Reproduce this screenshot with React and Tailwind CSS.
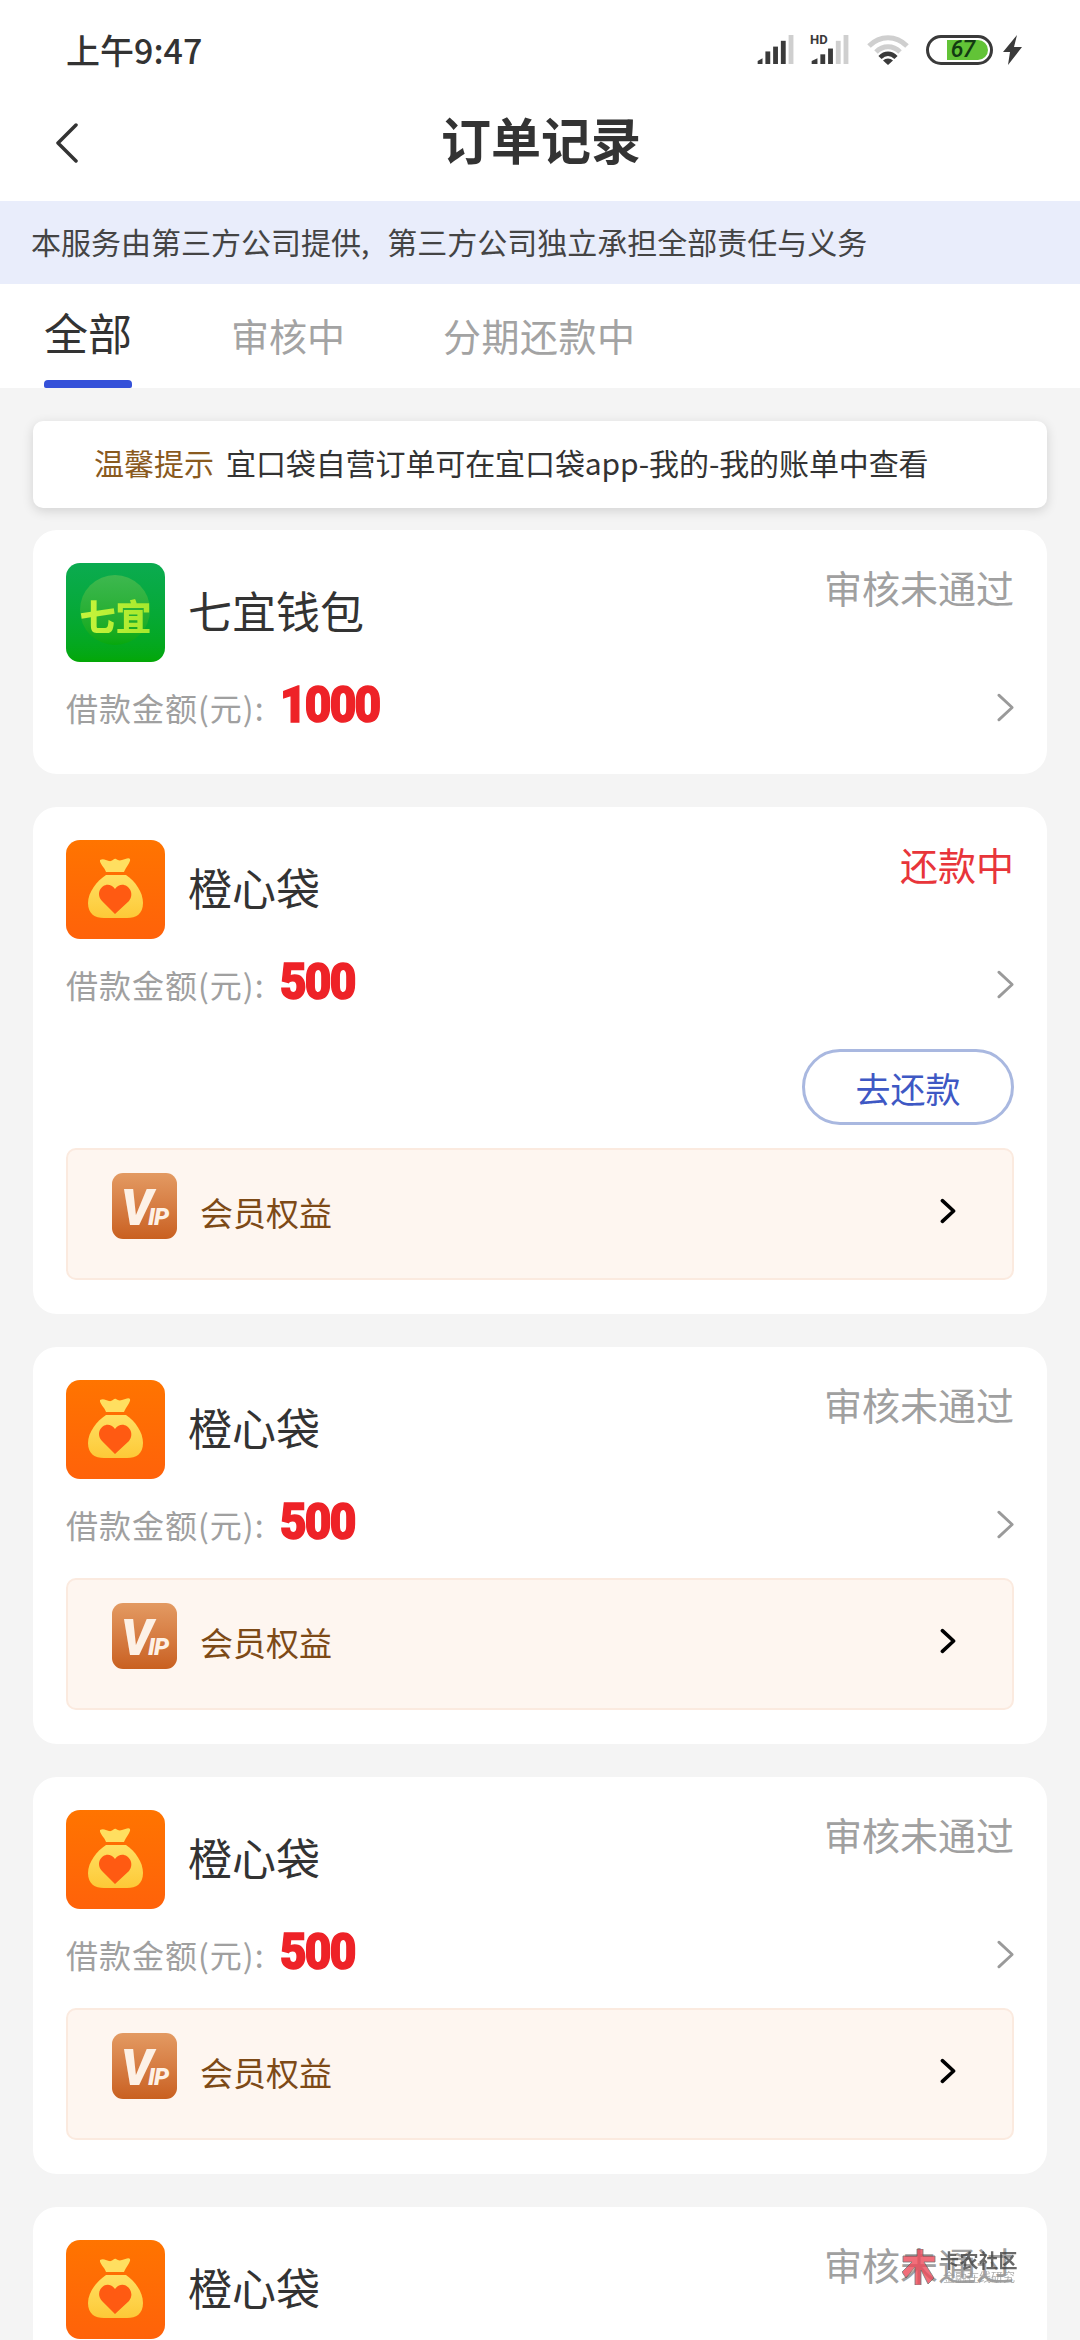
import React from "react";

const FONT = { fontFamily: '"Noto Sans CJK SC", "Noto Sans", sans-serif' };

function Chevron({ color = "#9a9a9a", width = 3, className = "" }) {
  return (
    <svg viewBox="0 0 20 32" className={className} fill="none">
      <path d="M3 3l14 13L3 29" stroke={color} strokeWidth={width} strokeLinecap="round" strokeLinejoin="round" />
    </svg>
  );
}

function SignalBars({ className = "" }) {
  return (
    <svg viewBox="0 0 40 30" className={className}>
      <path d="M0 30v-3l5-3v6z" fill="#3a3a3a" />
      <rect x="8" y="17" width="5" height="13" fill="#3a3a3a" />
      <rect x="16" y="12" width="5" height="18" fill="#3a3a3a" />
      <rect x="24" y="6" width="5" height="24" fill="#3a3a3a" />
      <rect x="32" y="0" width="5" height="30" fill="#cfcfcf" />
    </svg>
  );
}

function HdSignalBars({ className = "" }) {
  return (
    <svg viewBox="0 0 40 30" className={className}>
      <path d="M0 30v-3l6-3v6z" fill="#3a3a3a" />
      <rect x="9" y="20" width="5" height="10" fill="#3a3a3a" />
      <rect x="17" y="14" width="5" height="16" fill="#3a3a3a" />
      <rect x="25" y="6" width="5" height="24" fill="#cfcfcf" />
      <rect x="33" y="0" width="5" height="30" fill="#cfcfcf" />
    </svg>
  );
}

function StatusBar() {
  return (
    <div className="h-[90px] flex items-center pl-[66px] pr-[58px] pt-[9px] justify-between">
      <span className="text-[34px] font-medium text-[#333]">上午9:47</span>
      <div className="flex items-center">
        <SignalBars className="w-[40px] h-[29px]" />
        <div className="relative ml-[14px] w-[40px] h-[29px]">
          <HdSignalBars className="w-[40px] h-[29px] absolute bottom-0 left-0" />
          <span className="absolute left-[-1px] top-[-2px] text-[13px] leading-[14px] font-bold text-[#3a3a3a]" style={{ fontFamily: "Roboto, sans-serif" }}>HD</span>
        </div>
        <svg viewBox="0 0 42 30" className="ml-[16px] w-[42px] h-[30px]" fill="none">
          <path d="M2 11C13 0 29 0 40 11" stroke="#cfcfcf" strokeWidth="5" />
          <path d="M9 17C16 10 26 10 33 17" stroke="#cfcfcf" strokeWidth="5" />
          <path d="M13 22.500C18 17.500 24 17.500 29 22.500" stroke="#3a3a3a" strokeWidth="4.500" />
          <path d="M21 30l-5-4.500a7 7 0 0 1 10 0z" fill="#3a3a3a" />
        </svg>
        <div className="ml-[17px] w-[67px] h-[30px] rounded-full border-[3px] border-[#3a3a3a] p-[2px] flex justify-end">
          <div className="w-[41px] h-full rounded-r-full bg-[#62c337] flex items-center justify-center">
            <span className="text-[23px] leading-none font-medium italic text-[#123a12] tracking-[-1px] -ml-[10px]" style={{ fontFamily: "Roboto, sans-serif" }}>67</span>
          </div>
        </div>
        <svg viewBox="0 0 19 30" className="ml-[10px] w-[19px] h-[30px]">
          <path d="M14 0L0 17h7L5 30l14-18h-8z" fill="#3a3a3a" />
        </svg>
      </div>
    </div>
  );
}

function NavBar() {
  return (
    <div className="relative h-[111px] flex items-center justify-center">
      <svg viewBox="0 0 24 40" className="absolute left-[55px] top-[33px] w-[24px] h-[40px]" fill="none">
        <path d="M21 2L3 20l18 18" stroke="#333" strokeWidth="3.500" strokeLinecap="round" strokeLinejoin="round" />
      </svg>
      <h1 className="text-[50px] font-bold text-[#333] leading-none -mt-[16px] ml-[2px]">订单记录</h1>
    </div>
  );
}

function Tabs() {
  return (
    <div className="h-[104px] shrink-0 flex bg-white pl-[44px]">
      <div className="relative w-[88px] flex justify-center">
        <span className="text-[44px] leading-none text-[#333] mt-[26px] whitespace-nowrap">全部</span>
        <div className="absolute bottom-0 left-0 w-[88px] h-[8px] rounded-t-[4px] rounded-b-[2px] bg-[#3551d9]" />
      </div>
      <span className="ml-[99px] text-[38px] leading-none text-[#a3a3a3] mt-[32px]">审核中</span>
      <span className="ml-[98px] text-[38px] tracking-[0.5px] leading-none text-[#a3a3a3] mt-[32px]">分期还款中</span>
    </div>
  );
}

function QiyiLogo() {
  return (
    <div className="relative w-[99px] h-[99px] shrink-0 rounded-[14px] bg-gradient-to-b from-[#0bab50] to-[#03a705] overflow-hidden flex items-center justify-center">
      <div className="absolute left-[14px] top-[12px] w-[70px] h-[70px] rounded-full bg-gradient-to-b from-[#3db84f] to-[#06a80c]" />
      <span className="relative text-[36px] leading-none font-black bg-gradient-to-r from-[#c9f53c] to-[#a4e82c] bg-clip-text text-transparent whitespace-nowrap mt-[4px]">七宜</span>
    </div>
  );
}

function BagLogo() {
  return (
    <svg viewBox="0 0 99 99" className="w-[99px] h-[99px] shrink-0 rounded-[14px]">
      <defs>
        <linearGradient id="bagBg" x1="0" y1="0" x2="0" y2="1">
          <stop offset="0" stopColor="#ff7400" />
          <stop offset="1" stopColor="#ff620a" />
        </linearGradient>
        <linearGradient id="bagBody" x1="0" y1="0" x2="0" y2="1">
          <stop offset="0" stopColor="#ffe063" />
          <stop offset="1" stopColor="#fdc937" />
        </linearGradient>
      </defs>
      <rect width="99" height="99" fill="url(#bagBg)" />
      <path d="M34 20c3-2 6 0 9 1 3 1 5-3 7-2s3 2 6 1 7-3 8-1c1 3-4 8-6 13H40c-1-4-7-9-6-12z" fill="#ffdf60" />
      <path d="M40 35h20c9 6 17 17 17 28 0 11-7 15-16 15H38c-9 0-16-4-16-15 0-11 9-22 18-28z" fill="url(#bagBody)" />
      <path d="M49 74L36 61c-9-10 5-23 13-12 8-11 22 2 14 12z" fill="#ff5a12" />
    </svg>
  );
}

function VipLogo() {
  return (
    <div className="w-[65px] h-[66px] rounded-[11px] bg-gradient-to-b from-[#e39a62] to-[#c9601f] flex items-center justify-center overflow-hidden shrink-0">
      <span className="italic font-black text-[#fdf1e6] whitespace-nowrap flex items-end mt-[4px]" style={{ fontFamily: "Roboto, sans-serif" }}>
        <span className="text-[50px] leading-[36px] tracking-[-7px]">V</span>
        <span className="text-[24px] leading-[17px] tracking-[-1px] ml-[2px]">IP</span>
      </span>
    </div>
  );
}

function MemberBox() {
  return (
    <div className="h-[132px] rounded-[10px] border-[2px] border-[#fbeadf] bg-[#fef6f0] flex pl-[44px] pr-[56px]">
      <div className="mt-[23px]">
        <VipLogo />
      </div>
      <span className="ml-[23px] mt-[39px] text-[33px] leading-[46px] text-[#7d4a17]">会员权益</span>
      <Chevron color="#000" width={4.5} className="ml-auto mt-[47px] w-[16px] h-[28px]" />
    </div>
  );
}

function OrderCard({ logo, name, status, statusClass = "text-[#a0a0a0]", amount, action, member }) {
  return (
    <div className="bg-white rounded-[24px] px-[33px] pt-[33px] pb-[34px] shrink-0">
      <div className="flex items-start">
        {logo}
        <span className="ml-[23px] mt-[22px] text-[44px] leading-[50px] text-[#333] whitespace-nowrap">{name}</span>
        <span className={`ml-auto text-[38px] leading-[52px] -mt-[2px] ${statusClass}`}>{status}</span>
      </div>
      {amount ? (
        <div className="mt-[20px] h-[50px] flex items-center">
          <span className="text-[32px] text-[#a0a0a0] leading-none whitespace-nowrap tracking-[1px]">借款金额(元):</span>
          <span
            className="ml-[15px] -mt-[4px] origin-left text-[50px] leading-none font-black text-[#ee2227] tracking-[-2px] scale-x-[0.92] [-webkit-text-stroke:1.5px_#ee2227]"
            style={{ fontFamily: "Roboto, sans-serif" }}
          >
            {amount}
          </span>
          <Chevron className="ml-auto w-[19px] h-[31px] mr-[-1px]" />
        </div>
      ) : null}
      {action ? (
        <div className="mt-[40px] mb-[23px] flex justify-end">
          <button className="w-[212px] h-[76px] rounded-full border-[3px] border-[#a9b8e0] text-[35px] text-[#3e58c4] leading-none">{action}</button>
        </div>
      ) : null}
      {member ? (
        <div className={action ? "" : "mt-[29px]"}>
          <MemberBox />
        </div>
      ) : null}
    </div>
  );
}

export default function App() {
  const bag = <BagLogo />;
  return (
    <div className="relative w-[1080px] h-[2340px] overflow-hidden bg-[#f4f4f4] flex flex-col" style={FONT}>
      <div className="bg-white shrink-0">
        <StatusBar />
        <NavBar />
      </div>
      <div className="h-[83px] shrink-0 bg-[#e9edfb] flex items-center pl-[31px] pb-[2px] text-[30px] text-[#444] whitespace-nowrap">
        <span>本服务由第三方公司提供,</span>
        <span className="ml-[18px]">第三方公司独立承担全部责任与义务</span>
      </div>
      <Tabs />
      <div className="flex flex-col shrink-0 px-[33px] pt-[33px]">
        <div className="h-[87px] shrink-0 bg-white rounded-[10px] shadow-[0_3px_12px_rgba(0,0,0,0.14)] flex items-center pl-[61px] pb-[4px] text-[30px] whitespace-nowrap relative z-10">
          <span className="text-[#8a5a1e]">温馨提示</span>
          <span className="ml-[12px] text-[#333] tracking-[-0.1px]">宜口袋自营订单可在宜口袋app-我的-我的账单中查看</span>
        </div>
        <div className="mt-[22px] flex flex-col gap-[33px]">
          <div className="[&>div]:pb-[42px]">
            <OrderCard logo={<QiyiLogo />} name="七宜钱包" status="审核未通过" amount="1000" />
          </div>
          <OrderCard logo={bag} name="橙心袋" status="还款中" statusClass="text-[#e8353a]" amount="500" action="去还款" member />
          <OrderCard logo={bag} name="橙心袋" status="审核未通过" amount="500" member />
          <OrderCard logo={bag} name="橙心袋" status="审核未通过" amount="500" member />
          <OrderCard logo={bag} name="橙心袋" status="审核未通过" />
        </div>
      </div>
      {/* forum watermark stamped over the corner of the page */}
      <div className="absolute left-[902px] top-[2249px] flex items-center opacity-80">
        <svg viewBox="0 0 34 36" className="w-[34px] h-[36px]">
          <path d="M1 7h14V0h6v7h12v6H22l10 16-6 6-7-14v15h-6V18L4 29 0 23l10-10H1z" fill="#ee4a5a" stroke="#555" strokeWidth="0.800" />
        </svg>
        <div className="ml-[4px] flex flex-col items-center">
          <span className="text-[19px] leading-[20px] font-bold text-[#444] tracking-[0.5px] whitespace-nowrap">卡农社区</span>
          <span className="text-[12px] leading-[14px] text-[#999] whitespace-nowrap">金融在线研究</span>
        </div>
      </div>
    </div>
  );
}
